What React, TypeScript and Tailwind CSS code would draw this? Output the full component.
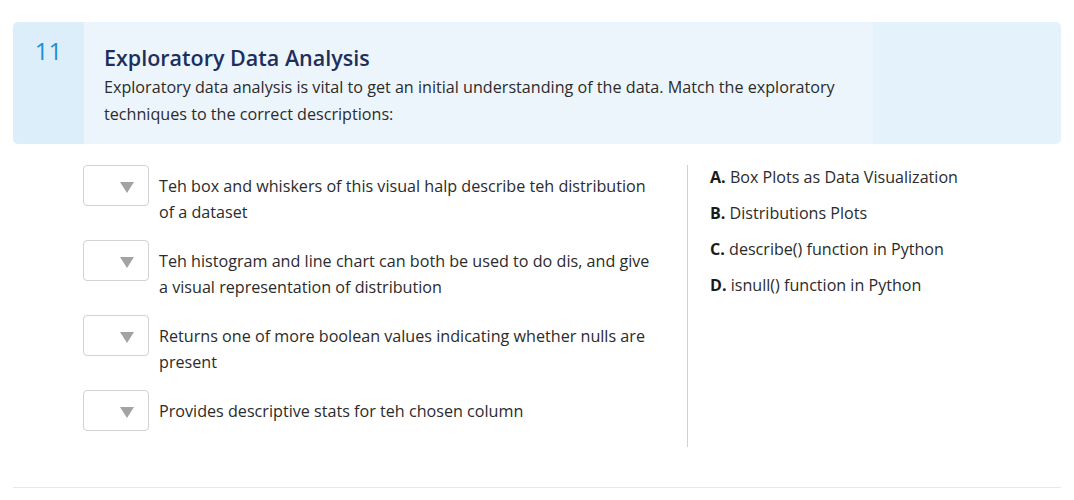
import React from "react";

const rows = [
  "Teh box and whiskers of this visual halp describe teh distribution of a dataset",
  "Teh histogram and line chart can both be used to do dis, and give a visual representation of distribution",
  "Returns one of more boolean values indicating whether nulls are present",
  "Provides descriptive stats for teh chosen column",
];

const options = [
  ["A.", "Box Plots as Data Visualization"],
  ["B.", "Distributions Plots"],
  ["C.", "describe() function in Python"],
  ["D.", "isnull() function in Python"],
];

function Dropdown() {
  return (
    <div className="relative w-[66px] h-[41px] shrink-0 rounded-[4px] border border-[#d2d2d2] bg-white">
      <svg
        className="absolute right-[14px] top-[16px]"
        width="14"
        height="11"
        viewBox="0 0 14 11"
      >
        <polygon points="0,0 14,0 7,11" fill="#a3a3a3" />
      </svg>
    </div>
  );
}

export default function App() {
  return (
    <div
      className="w-[1074px] h-[500px] bg-white pt-[22px] px-[13px] text-[#2b2b2b]"
      style={{ fontFamily: '"Open Sans", "Noto Sans", sans-serif' }}
    >
      <div className="flex h-[122px] rounded-[5px] overflow-hidden">
        <div className="w-[71px] shrink-0 bg-[#dbeef9] text-center pt-[13px] text-[24px] leading-[32px] font-medium text-[#1a8fd6]">
          11
        </div>
        <div className="flex-1 bg-[#edf5fc] pl-[20px] pr-[20px] pt-[21px]">
          <div className="text-[21.5px] leading-[30px] font-semibold text-[#1d2f5d]">
            Exploratory Data Analysis
          </div>
          <div className="text-[16.15px] leading-[27px] text-[#2b2b2b] mt-[1px]">
            Exploratory data analysis is vital to get an initial understanding of the data. Match the exploratory techniques to the correct descriptions:
          </div>
        </div>
        <div className="w-[188px] shrink-0 bg-[#e4f2fb]" />
      </div>

      <div className="flex mt-[21px] pl-[70px]">
        <div className="w-[604px] shrink-0 pr-[30px] pb-[16px] flex flex-col gap-[15px]">
          {rows.map((t, i) => (
            <div key={i} className="flex items-start">
              <Dropdown />
              <div className="pl-[10px] pt-[8px] text-[16.15px] leading-[26px] text-[#2b2b2b]">
                {t}
              </div>
            </div>
          ))}
        </div>
        <div className="border-l border-[#d0d0d0] pl-[22px] flex flex-col gap-[12px]">
          {options.map(([l, t]) => (
            <div key={l} className="text-[16.1px] leading-[24px] text-[#2b2b2b]">
              <span className="font-bold text-[#1a1a1a]">{l}</span> {t}
            </div>
          ))}
        </div>
      </div>

      <div className="mt-[40px] border-t border-[#e8e8e8]" />
    </div>
  );
}
